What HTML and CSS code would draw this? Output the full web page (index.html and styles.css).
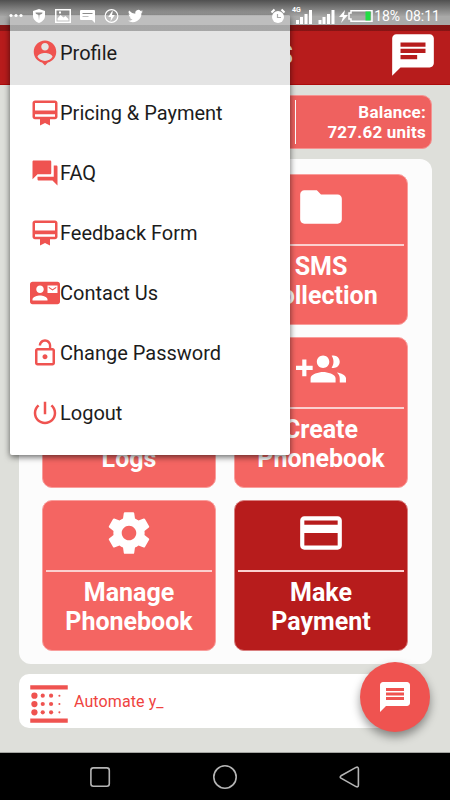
FILE: index.html
```
<!DOCTYPE html>
<html lang="en">
<head>
    <meta charset="UTF-8">
    <meta name="viewport" content="width=device-width, initial-scale=1.0">
    <title>Bulk SMS</title>
    <link rel="stylesheet" href="styles.css">
</head>
<body>
<div class="app">
    <header class="app-bar">
        <h1 class="app-title">Bulk SMS</h1>
        <svg class="app-chat" viewBox="0 0 24 24"><path d="M20 2H4c-1.1 0-1.99.9-1.99 2L2 22l4-4h14c1.1 0 2-.9 2-2V4c0-1.1-.9-2-2-2zM6 9h12v2H6V9zm8 5H6v-2h8v2zm4-6H6V6h12v2z"/></svg>
    </header>

    <main class="content">
        <section class="balance">
            <div class="balance-text">Balance:<br>727.62 units</div>
        </section>

        <section class="panel">
            <div class="tile"></div>
            <div class="tile">
                <svg class="tile-icon" viewBox="0 0 24 24"><path d="M10 4H4c-1.1 0-1.99.9-1.99 2L2 18c0 1.1.9 2 2 2h16c1.1 0 2-.9 2-2V8c0-1.1-.9-2-2-2h-8l-2-2z"/></svg>
                <div class="tile-label">SMS<br>Collection</div>
            </div>
            <div class="tile">
                <div class="tile-icon"></div>
                <div class="tile-label"><br>Logs</div>
            </div>
            <div class="tile">
                <svg class="tile-icon" viewBox="0 0 24 24"><path d="M8 10H5V7H3v3H0v2h3v3h2v-3h3v-2zm10 1c1.66 0 2.99-1.34 2.99-3S19.66 5 18 5c-.32 0-.63.05-.91.14.57.81.9 1.79.9 2.86s-.34 2.04-.9 2.86c.28.09.59.14.91.14zm-5 0c1.66 0 2.99-1.34 2.99-3S14.66 5 13 5c-1.66 0-3 1.34-3 3s1.34 3 3 3zm6.62 2.16c.83.73 1.38 1.66 1.38 2.84v2h3v-2c0-1.54-2.37-2.49-4.38-2.84zM13 13c-2 0-6 1-6 3v2h12v-2c0-2-4-3-6-3z"/></svg>
                <div class="tile-label">Create<br>Phonebook</div>
            </div>
            <div class="tile">
                <svg class="tile-icon" viewBox="0 0 24 24"><path d="M19.43 12.98c.04-.32.07-.64.07-.98s-.03-.66-.07-.98l2.11-1.65c.19-.15.24-.42.12-.64l-2-3.46c-.12-.22-.39-.3-.61-.22l-2.49 1c-.52-.4-1.08-.73-1.69-.98l-.38-2.65C14.46 2.18 14.25 2 14 2h-4c-.25 0-.46.18-.49.42l-.38 2.65c-.61.25-1.17.59-1.69.98l-2.49-1c-.23-.09-.49 0-.61.22l-2 3.46c-.13.22-.07.49.12.64l2.11 1.65c-.04.32-.07.65-.07.98s.03.66.07.98l-2.11 1.65c-.19.15-.24.42-.12.64l2 3.46c.12.22.39.3.61.22l2.49-1c.52.4 1.08.73 1.69.98l.38 2.65c.03.24.24.42.49.42h4c.25 0 .46-.18.49-.42l.38-2.65c.61-.25 1.17-.59 1.69-.98l2.49 1c.23.09.49 0 .61-.22l2-3.46c.12-.22.07-.49-.12-.64l-2.11-1.65zM12 15.5c-1.93 0-3.5-1.57-3.5-3.5s1.57-3.5 3.5-3.5 3.5 1.57 3.5 3.5-1.57 3.5-3.5 3.5z"/></svg>
                <div class="tile-label">Manage<br>Phonebook</div>
            </div>
            <div class="tile tile-dark">
                <svg class="tile-icon" viewBox="0 0 24 24"><path d="M20 4H4c-1.11 0-1.99.89-1.99 2L2 18c0 1.11.89 2 2 2h16c1.11 0 2-.89 2-2V6c0-1.11-.89-2-2-2zm0 14H4v-6h16v6zm0-10H4V6h16v2z"/></svg>
                <div class="tile-label">Make<br>Payment</div>
            </div>
        </section>

        <section class="ticker">
            <svg class="ticker-icon" viewBox="0 0 24 24">
                <path d="M3 3h18v2H3zM3 19h18v2H3z"/>
                <circle cx="5" cy="8" r="1.5"/><circle cx="5" cy="12" r="1.5"/><circle cx="5" cy="16" r="1.5"/>
                <circle cx="9" cy="8" r="1"/><circle cx="9" cy="12" r="1"/><circle cx="9" cy="16" r="1"/>
                <circle cx="13" cy="8" r="1"/><circle cx="13" cy="12" r="1"/><circle cx="13" cy="16" r="1"/>
                <circle cx="17" cy="8" r=".5"/><circle cx="17" cy="12" r=".5"/><circle cx="17" cy="16" r=".5"/>
            </svg>
            <span class="ticker-text">Automate y_</span>
        </section>
    </main>

    <nav class="nav-bar">
        <svg viewBox="0 0 26 26"><rect x="3.9" y="3.9" width="18.4" height="18.4" rx="2.5"/></svg>
        <svg viewBox="0 0 26 26"><circle cx="13" cy="13" r="11.2"/></svg>
        <svg viewBox="0 0 26 26"><path d="M4 11.8L19 3.4Q21.4 2.4 21.4 5V21Q21.4 23.6 19 22.6L4 14.2Q2.4 13 4 11.8z"/></svg>
    </nav>

    <button class="fab">
        <svg viewBox="0 0 24 24"><path d="M20 2H4c-1.1 0-1.99.9-1.99 2L2 22l4-4h14c1.1 0 2-.9 2-2V4c0-1.1-.9-2-2-2zm-2 12H6v-2h12v2zm0-3H6V9h12v2zm0-3H6V6h12v2z"/></svg>
    </button>

    <div class="menu">
        <div class="menu-item active">
            <svg viewBox="0 0 24 24"><path d="M12 2c-4.97 0-9 4.03-9 9 0 4.17 2.84 7.67 6.69 8.69L12 22l2.31-2.31C18.16 18.67 21 15.17 21 11c0-4.97-4.03-9-9-9zm0 2c1.66 0 3 1.34 3 3s-1.34 3-3 3-3-1.34-3-3 1.34-3 3-3zm0 14.3c-2.5 0-4.71-1.28-6-3.22.03-1.99 4-3.08 6-3.08 1.99 0 5.97 1.09 6 3.08-1.29 1.94-3.5 3.22-6 3.22z"/></svg>
            <span>Profile</span>
        </div>
        <div class="menu-item">
            <svg viewBox="0 0 24 24"><path d="M20 2H4c-1.11 0-2 .89-2 2v11c0 1.11.89 2 2 2h4v5l4-2 4 2v-5h4c1.11 0 2-.89 2-2V4c0-1.11-.89-2-2-2zm0 13H4v-2h16v2zm0-5H4V4h16v6z"/></svg>
            <span>Pricing &amp; Payment</span>
        </div>
        <div class="menu-item">
            <svg viewBox="0 0 24 24"><path d="M21 6h-2v9H6v2c0 .55.45 1 1 1h11l4 4V7c0-.55-.45-1-1-1zm-4 6V3c0-.55-.45-1-1-1H3c-.55 0-1 .45-1 1v14l4-4h10c.55 0 1-.45 1-1z"/></svg>
            <span>FAQ</span>
        </div>
        <div class="menu-item">
            <svg viewBox="0 0 24 24"><path d="M20 2H4c-1.11 0-2 .89-2 2v11c0 1.11.89 2 2 2h4v5l4-2 4 2v-5h4c1.11 0 2-.89 2-2V4c0-1.11-.89-2-2-2zm0 13H4v-2h16v2zm0-5H4V4h16v6z"/></svg>
            <span>Feedback Form</span>
        </div>
        <div class="menu-item">
            <svg viewBox="0 0 24 24"><path d="M21 8V7l-3 2-3-2v1l3 2 3-2zm1-5H2C.9 3 0 3.9 0 5v14c0 1.1.9 2 2 2h20c1.1 0 1.99-.9 1.99-2L24 5c0-1.1-.9-2-2-2zM8 6c1.66 0 3 1.34 3 3s-1.34 3-3 3-3-1.34-3-3 1.34-3 3-3zm6 12H2v-1c0-2 4-3.1 6-3.1s6 1.1 6 3.1v1zm8-6h-8V6h8v6z"/></svg>
            <span>Contact Us</span>
        </div>
        <div class="menu-item">
            <svg viewBox="0 0 24 24"><path d="M12 17c1.1 0 2-.9 2-2s-.9-2-2-2-2 .9-2 2 .9 2 2 2zm6-9h-1V6c0-2.76-2.24-5-5-5S7 3.24 7 6h1.9c0-1.71 1.39-3.1 3.1-3.1 1.71 0 3.1 1.39 3.1 3.1v2H6c-1.1 0-2 .9-2 2v10c0 1.1.9 2 2 2h12c1.1 0 2-.9 2-2V10c0-1.1-.9-2-2-2zm0 12H6V10h12v10z"/></svg>
            <span>Change Password</span>
        </div>
        <div class="menu-item">
            <svg viewBox="0 0 24 24"><path d="M13 3h-2v10h2V3zm4.83 2.17l-1.42 1.42C17.99 7.86 19 9.81 19 12c0 3.87-3.13 7-7 7s-7-3.13-7-7c0-2.19 1.01-4.14 2.58-5.42L6.17 5.17C4.23 6.82 3 9.26 3 12c0 4.97 4.03 9 9 9s9-4.03 9-9c0-2.74-1.23-5.18-3.17-6.83z"/></svg>
            <span>Logout</span>
        </div>
    </div>

    <div class="status-bar">
        <div class="status-left">
            <svg width="14" height="16" viewBox="0 0 14 16"><circle cx="2" cy="7.5" r="1.6"/><circle cx="7" cy="7.5" r="1.6"/><circle cx="12" cy="7.5" r="1.6"/></svg>
            <svg width="14" height="16" viewBox="0 0 14 16"><path fill-rule="evenodd" d="M7 1l6 2v5c0 3.5-3 5.8-6 7-3-1.2-6-3.5-6-7V3zM3.5 4.5c0 1.5 1.5 2 2.7 2L7 12.5l.8-6c1.2 0 2.7-.5 2.7-2z"/></svg>
            <svg width="16" height="16" viewBox="0 0 16 16"><path fill-rule="evenodd" d="M0 1h16v14H0zM1.5 2.5v11h13v-11zM2.5 12.5v-2l3-3.5 3 2.5 2-1.5 3 3v1.5zM4 3.5h2v2H4z"/></svg>
            <svg width="15" height="16" viewBox="0 0 15 16"><path fill-rule="evenodd" d="M1 2h13a1 1 0 0 1 1 1v12l-3-3H1a1 1 0 0 1-1-1V3a1 1 0 0 1 1-1zM2.5 5v1h10V5zM2.5 8v1h6V8z"/></svg>
            <svg width="15" height="16" viewBox="0 0 16 16"><circle class="ring" cx="8" cy="8" r="6.8"/><path d="M8.5 3L4.5 9h3l-.5 4.5 4.5-6.5h-3l1-4z"/></svg>
            <svg width="15" height="16" viewBox="0 0 24 24"><path d="M24 4.6a10 10 0 0 1-2.8.8 5 5 0 0 0 2.1-2.7 10 10 0 0 1-3.1 1.2 4.9 4.9 0 0 0-8.4 4.5A14 14 0 0 1 1.7 3.2 4.9 4.9 0 0 0 3.2 9.7 5 5 0 0 1 1 9.1a4.9 4.9 0 0 0 3.9 4.9 5 5 0 0 1-2.2.1 4.9 4.9 0 0 0 4.6 3.4A10 10 0 0 1 0 19.5a14 14 0 0 0 21.5-12.4A10 10 0 0 0 24 4.6z"/></svg>
        </div>
        <div class="status-right">
            <svg width="104" height="20" viewBox="0 0 104 20">
                <circle cx="8" cy="11" r="6"/>
                <path class="stroke" d="M1.5 6.5l3-3M14.5 6.5l-3-3"/>
                <path class="mark" d="M7.5 8v3.5h3.5"/>
                <text class="net" x="22" y="6">4G</text>
                <path d="M26 14h3v4h-3zM30 11h3v7h-3zM34.5 8h3v10h-3zM39 4h3v14h-3zM48.5 14h3v4h-3zM52.5 11h3v7h-3zM57 8h3v10h-3zM61.5 4h3v14h-3zM75 4l-6 7h4l-2 6 7-8h-4z"/>
                <path class="battery" d="M81 4.7h21v10.6H81V13h-2V7h2z"/>
                <rect class="charge" x="95.5" y="5.5" width="5" height="9"/>
            </svg>
            <span class="percent">18%</span>
            <span class="clock">08:11</span>
        </div>
    </div>
</div>
</body>
</html>
```

FILE: styles.css
```
* {
    margin: 0;
    padding: 0;
    box-sizing: border-box;
}

body {
    font-family: Roboto, sans-serif;
    background: #dedfda;
}

svg {
    display: block;
}

.app {
    position: relative;
    width: 450px;
    height: 800px;
    padding-top: 25px;
    background: #cbcbca;
    display: flex;
    flex-direction: column;
    overflow: hidden;
}

.app-bar {
    height: 60px;
    padding: 0 12px;
    background: #b71c1c;
    border-bottom: 1px solid #ac0b0b;
    display: flex;
    align-items: center;
    justify-content: space-between;
}

.app-title {
    width: 281px;
    text-align: right;
    font-size: 27px;
    font-weight: bold;
    color: white;
}

.app-chat {
    width: 50px;
    height: 50px;
    fill: white;
}

.content {
    flex: 1;
    padding: 10px 18px 0 19px;
    background: #dedfda;
    display: flex;
    flex-direction: column;
    border-bottom: 1px solid #a5a6a2;
}

.balance {
    height: 54px;
    padding: 5px;
    background: #ef615f;
    border: 1px solid #f59391;
    border-radius: 10px;
    display: flex;
    justify-content: flex-end;
    color: white;
    font-size: 17px;
    font-weight: bold;
    line-height: 20px;
    letter-spacing: 0.22px;
    text-align: right;
}

.balance-text {
    width: 131px;
    height: 44px;
    padding-top: 2px;
    margin-top: -1px;
    border-left: 1px solid white;
}

.panel {
    height: 505px;
    margin-top: 10px;
    padding: 15px 24px 0 23px;
    background: #fcfcfc;
    border-radius: 12px;
    display: grid;
    grid-template-columns: 174px 174px;
    grid-auto-rows: 151px;
    column-gap: 18px;
    row-gap: 12px;
}

.tile {
    padding: 7px 3px 0;
    background: #f46562;
    border: 1px solid #f99e9c;
    border-radius: 10px;
    color: white;
    text-align: center;
}

.tile-dark {
    background: #b71c1c;
    border-color: #d98080;
}

.tile-icon {
    width: 50px;
    height: 50px;
    margin: 0 auto 12px;
    fill: white;
}

.tile-label {
    padding-top: 6px;
    border-top: 2px solid #fbd0cf;
    font-size: 25px;
    font-weight: bold;
    line-height: 29px;
}

.ticker {
    width: 388px;
    height: 54px;
    margin-top: 10px;
    padding: 5px 5px 0;
    background: white;
    border-radius: 10px;
    display: flex;
}

.ticker-icon {
    width: 50px;
    height: 50px;
    fill: #ef5350;
}

.ticker-text {
    font-size: 16px;
    line-height: 45px;
    color: #ef4340;
    letter-spacing: 0.1px;
}

.nav-bar {
    height: 47px;
    padding: 0 87px;
    background: black;
    display: flex;
    align-items: center;
    justify-content: space-between;
}

.nav-bar svg {
    width: 26px;
    height: 26px;
    fill: none;
    stroke: #b5b5b5;
    stroke-width: 1.6;
}

.fab {
    position: absolute;
    right: 20px;
    top: 662px;
    width: 70px;
    height: 70px;
    border: none;
    border-radius: 50%;
    background: #ef5350;
    box-shadow: 0 5px 10px rgba(0, 0, 0, 0.4);
    display: flex;
    align-items: center;
    justify-content: center;
}

.fab svg {
    width: 36px;
    height: 36px;
    fill: white;
}

.menu {
    position: absolute;
    left: 10px;
    top: 15px;
    width: 280px;
    height: 440px;
    background: white;
    border-radius: 2px;
    box-shadow: 0 2px 6px rgba(0, 0, 0, 0.6);
    overflow: hidden;
}

.menu-item {
    height: 60px;
    padding-left: 20px;
    display: flex;
    align-items: center;
    font-size: 20px;
    color: #1c1c1c;
}

.menu-item.active {
    height: 70px;
    padding-top: 6px;
    margin-bottom: -2px;
    background: #e4e4e4;
}

.menu-item svg {
    width: 30px;
    height: 30px;
    fill: #ef5350;
}

/* system bar drawn over everything */
.status-bar {
    position: absolute;
    left: 0;
    top: 0;
    width: 450px;
    height: 31px;
    padding: 0 10px 0 9px;
    background: linear-gradient(#505050 0, rgba(80, 80, 80, 0.05) 16px, rgba(80, 80, 80, 0) 16px),
                linear-gradient(rgba(0, 0, 0, 0.17) 25px, rgba(0, 0, 0, 0.27) 25px);
    display: flex;
    justify-content: space-between;
    color: white;
    fill: white;
}

.status-left {
    display: flex;
    gap: 9px;
    padding-top: 8px;
}

.status-right {
    display: flex;
    padding-top: 6px;
    font-size: 14px;
    line-height: 20px;
}

.percent {
    width: 31px;
}

.ring {
    fill: none;
    stroke: white;
    stroke-width: 1.2;
}

.stroke {
    stroke: white;
    stroke-width: 2;
}

.mark {
    fill: none;
    stroke: #aaa;
    stroke-width: 1.2;
}

.net {
    font-size: 7px;
    font-weight: bold;
}

.battery {
    fill: none;
    stroke: white;
    stroke-width: 1.5;
}

.charge {
    fill: #22dd44;
}
```
